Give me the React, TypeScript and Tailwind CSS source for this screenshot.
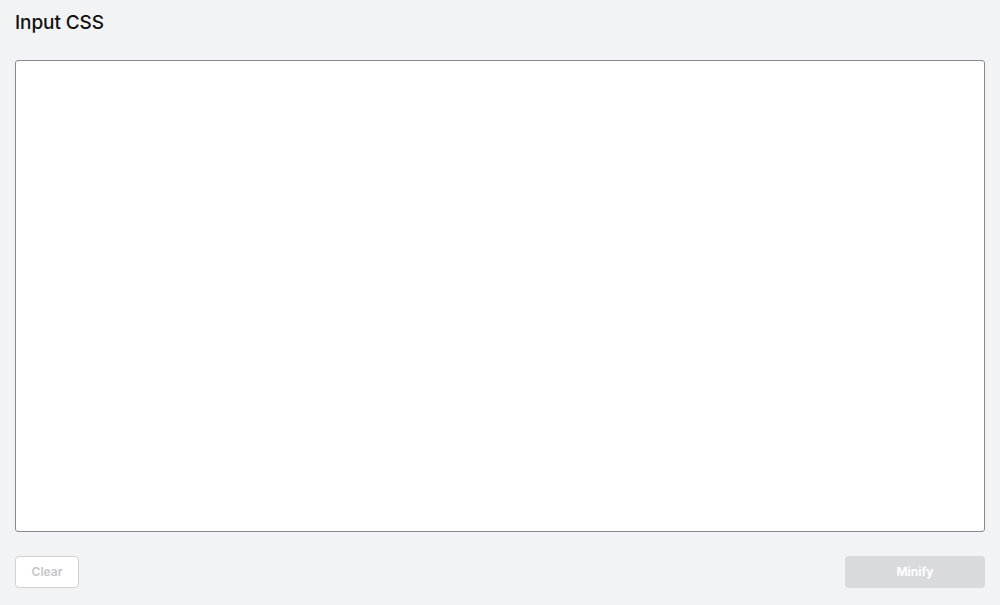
import React, { useState } from "react";

export default function App() {
  const [css, setCss] = useState("");
  const empty = css.trim().length === 0;

  return (
    <div className="min-h-[605px] w-full bg-[#f2f3f5] px-[15px] pt-[10px] font-['Inter',sans-serif] text-[#111]">
      <h1 className="h-[26px] text-[19px] leading-[26px] font-medium tracking-[-0.1px]">Input CSS</h1>

      <textarea
        value={css}
        onChange={(e) => setCss(e.target.value)}
        className="mt-[24px] block h-[472px] w-full resize-none rounded-[3px] border border-[#85888e] bg-white p-2 font-['Liberation_Mono',monospace] text-sm outline-none"
      />

      <div className="mt-[24px] flex items-center justify-between">
        <button
          disabled={empty}
          onClick={() => setCss("")}
          className="h-[32px] w-[64px] rounded-[4px] border border-[#cfd1d5] bg-white text-[12px] font-semibold text-[#c4c6ca]"
        >
          Clear
        </button>
        <button
          disabled={empty}
          className="h-[32px] w-[140px] rounded-[4px] bg-[#d9dadd] text-[12px] font-bold text-white"
        >
          Minify
        </button>
      </div>
    </div>
  );
}
